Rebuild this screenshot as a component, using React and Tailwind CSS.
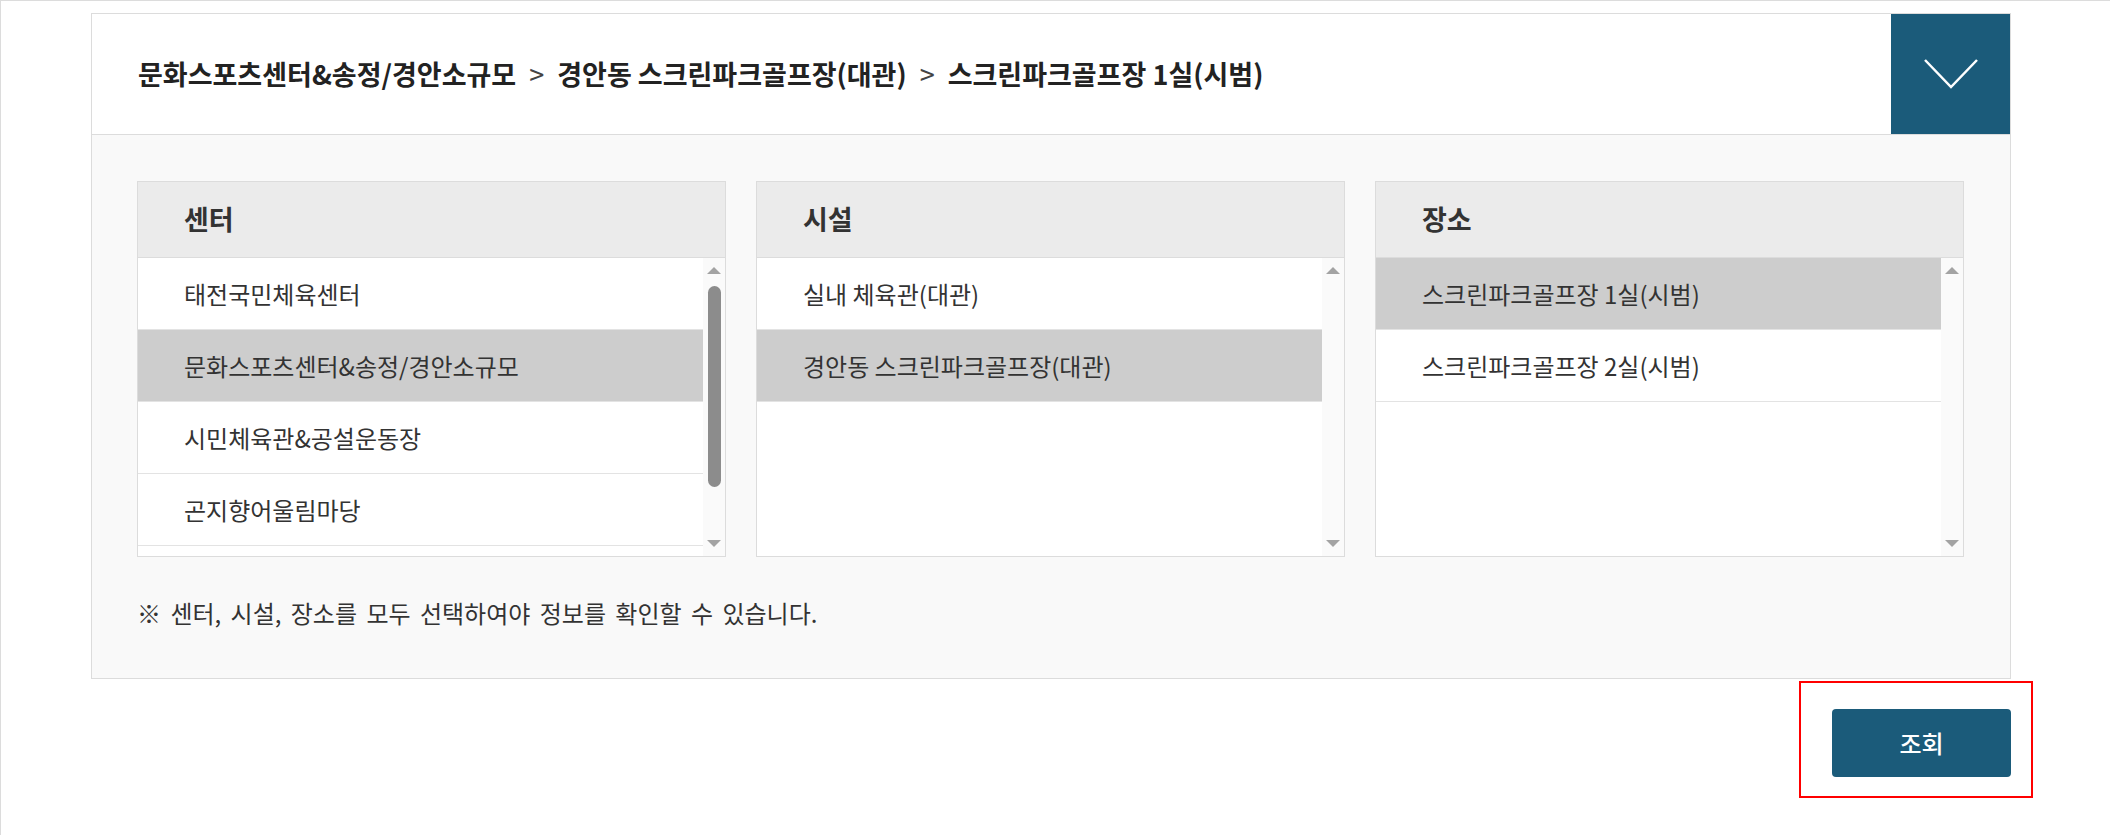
import React from 'react';

const FONT = { fontFamily: '"Noto Sans CJK KR", "Noto Sans", sans-serif' };

const PANELS = [
  {
    title: '센터',
    items: ['태전국민체육센터', '문화스포츠센터&송정/경안소규모', '시민체육관&공설운동장', '곤지향어울림마당', ''],
    selected: 1,
    thumb: true,
  },
  {
    title: '시설',
    items: ['실내 체육관(대관)', '경안동 스크린파크골프장(대관)'],
    selected: 1,
    thumb: false,
  },
  {
    title: '장소',
    items: ['스크린파크골프장 1실(시범)', '스크린파크골프장 2실(시범)'],
    selected: 0,
    thumb: false,
  },
];

function ScrollBar({ thumb }) {
  return (
    <div className="w-[22px] h-full bg-[#fafafa] flex flex-col items-center justify-between py-[9px]">
      <svg width="14" height="7" viewBox="0 0 14 7">
        <polygon points="7,0 14,7 0,7" fill="#a3a3a3" />
      </svg>
      <div className="flex-1 w-full flex justify-center pt-[12px]">
        {thumb && <div className="w-[13px] h-[201px] rounded-full bg-[#8c8c8c]" />}
      </div>
      <svg width="14" height="7" viewBox="0 0 14 7">
        <polygon points="0,0 14,0 7,7" fill="#a3a3a3" />
      </svg>
    </div>
  );
}

function Panel({ title, items, selected, thumb }) {
  return (
    <div className="w-[589px] border border-[#dcdcdc] bg-white flex flex-col">
      <div className="h-[76px] bg-[#ebebeb] border-b border-[#dcdcdc] flex items-center pl-[46px] text-[27px] font-bold text-[#333]">
        {title}
      </div>
      <div className="h-[298px] flex overflow-hidden">
        <div className="flex-1 flex flex-col">
          {items.map((item, i) => (
            <div
              key={i}
              className={`h-[72px] shrink-0 border-b border-[#e3e3e3] flex items-center pl-[46px] text-[24px] text-[#333] ${
                i === selected ? 'bg-[#cdcdcd]' : 'bg-white'
              }`}
            >
              {item}
            </div>
          ))}
        </div>
        <ScrollBar thumb={thumb} />
      </div>
    </div>
  );
}

export default function App() {
  return (
    <div style={FONT} className="h-[835px] bg-white border-t border-l border-[#dcdcdc] pl-[90px] pt-[12px]">
      <div className="w-[1920px] border border-[#dcdcdc]">
        <div className="h-[121px] bg-white border-b border-[#dcdcdc] flex items-center justify-between pl-[46px]">
          <div className="flex items-center gap-[13px] text-[27px] font-bold text-[#222]">
            <span>문화스포츠센터&송정/경안소규모</span>
            <span className="font-normal text-[#444]">&gt;</span>
            <span>경안동 스크린파크골프장(대관)</span>
            <span className="font-normal text-[#444]">&gt;</span>
            <span>스크린파크골프장 1실(시범)</span>
          </div>
          <div className="w-[119px] h-full bg-[#1b5b7a] flex items-center justify-center">
            <svg width="56" height="32" viewBox="0 0 56 32">
              <polyline points="2,2 28,29 54,2" fill="none" stroke="#fff" strokeWidth="2.5" />
            </svg>
          </div>
        </div>
        <div className="bg-[#f9f9f9] px-[45px] pt-[46px] pb-[53px]">
          <div className="flex gap-[30px]">
            {PANELS.map((p) => (
              <Panel key={p.title} {...p} />
            ))}
          </div>
          <p className="mt-[44px] h-[24px] leading-[24px] text-[24px] text-[#333] [word-spacing:4px]">
            ※ 센터, 시설, 장소를 모두 선택하여야 정보를 확인할 수 있습니다.
          </p>
        </div>
      </div>
      <div className="w-[1920px] flex justify-end mt-[30px]">
        <div className="relative">
          <button className="w-[179px] h-[68px] rounded-[4px] bg-[#1b5b7a] text-white text-[24px] font-medium">
            조회
          </button>
          <div className="absolute -left-[33px] -right-[22px] -top-[28px] -bottom-[21px] border-2 border-[#ff0000] pointer-events-none" />
        </div>
      </div>
    </div>
  );
}
